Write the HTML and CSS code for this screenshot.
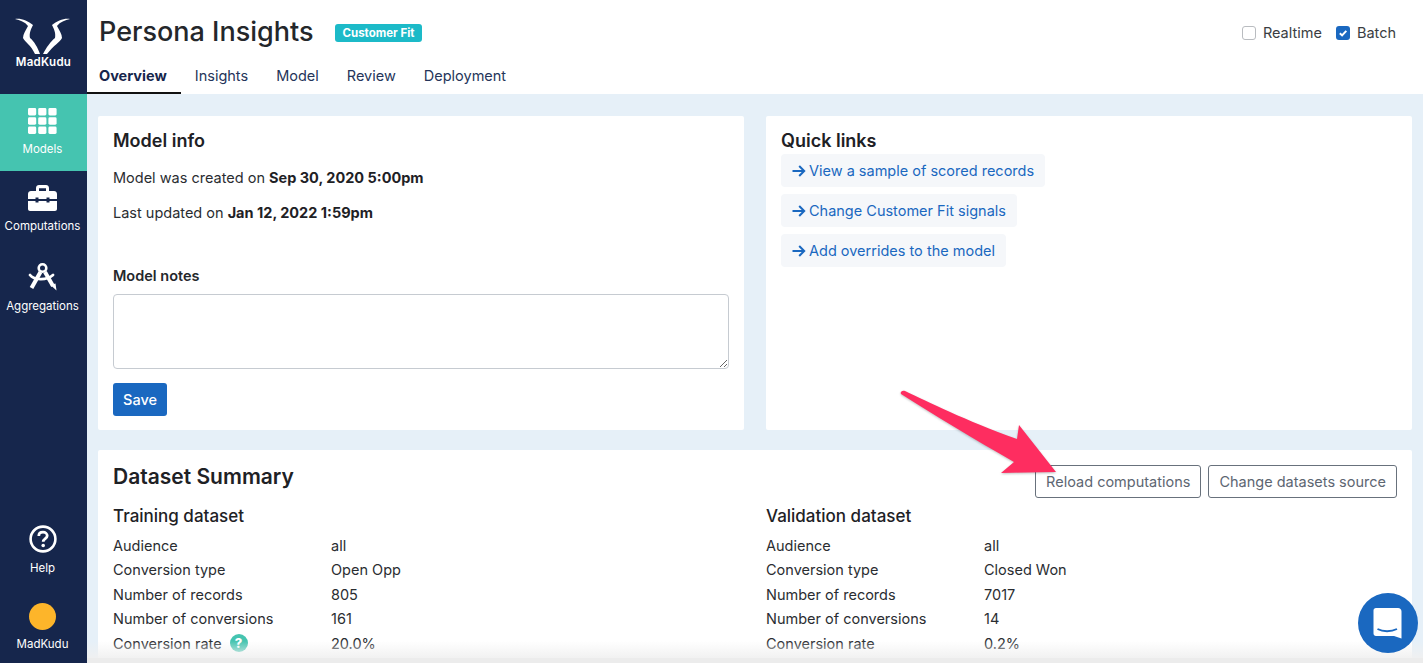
FILE: index.html
```html
<!DOCTYPE html>
<html lang="en">
  <head>
    <meta charset="UTF-8" />
    <meta name="viewport" content="width=device-width, initial-scale=1.0" />
    <title>Persona Insights</title>

    <link rel="stylesheet" href="styles.css">
  </head>
  <body>
    <div class="app">
      <nav class="sidebar">
        <div class="brand">
          <svg class="brand-logo" viewBox="0 0 58 38" width="58" height="38">
            <g id="antler">
              <path fill="#fff" d="M1 2 C6 3 11 5 14 9 C12 13 9 17 9 21 C11 25 17 28 21 37 L26 37 C24 31 20 24 16 21 C15 16 17 12 19 8 C14 4 7 1 1 2 Z" />
            </g>
            <path fill="#fff" d="M56 2 C51 3 46 5 43 9 C45 13 48 17 48 21 C46 25 40 28 33 37 L29 37 C32 31 37 24 41 21 C42 16 40 12 38 8 C43 4 50 1 56 2 Z" />
          </svg>
          <span class="brand-name">MadKudu</span>
        </div>

        <a class="nav-item active">
          <svg viewBox="0 0 29 26" width="29" height="26">
            <g fill="#fff">
              <rect x="0" y="0" width="8.2" height="7.4" rx="1.4" />
              <rect x="10.2" y="0" width="8.2" height="7.4" rx="1.4" />
              <rect x="20.4" y="0" width="8.2" height="7.4" rx="1.4" />
              <rect x="0" y="9.3" width="8.2" height="7.4" rx="1.4" />
              <rect x="10.2" y="9.3" width="8.2" height="7.4" rx="1.4" />
              <rect x="20.4" y="9.3" width="8.2" height="7.4" rx="1.4" />
              <rect x="0" y="18.6" width="8.2" height="7.4" rx="1.4" />
              <rect x="10.2" y="18.6" width="8.2" height="7.4" rx="1.4" />
              <rect x="20.4" y="18.6" width="8.2" height="7.4" rx="1.4" />
            </g>
          </svg>
          <span>Models</span>
        </a>
        <a class="nav-item">
          <svg viewBox="0 0 29 26" width="29" height="26">
            <path fill="#fff" d="M8 6 V3 C8 1.3 9.3 0 11 0 H18 C19.700 0 21 1.300 21 3 V6 H18 V3.200 H11 V6 Z" />
            <path fill="#fff" d="M3 6 H26 C27.700 6 29 7.300 29 9 V14 H21.500 V12.500 H18.500 V14 H10.500 V12.500 H7.500 V14 H0 V9 C0 7.300 1.300 6 3 6 Z" />
            <path fill="#fff" d="M0 16 H7.500 V17.500 H10.500 V16 H18.500 V17.500 H21.500 V16 H29 V24 C29 25.100 28.100 26 27 26 H2 C0.900 26 0 25.100 0 24 Z" />
          </svg>
          <span>Computations</span>
        </a>
        <a class="nav-item">
          <svg viewBox="0 0 29 29" width="29" height="29">
            <circle cx="14.500" cy="6" r="3.800" fill="none" stroke="#fff" stroke-width="2.600" />
            <path fill="none" stroke="#fff" stroke-width="4" d="M12.500 10 L3.500 26" />
            <path fill="none" stroke="#fff" stroke-width="4" d="M17 10 L25 24" />
            <path fill="none" stroke="#fff" stroke-width="2.800" stroke-linecap="round" d="M2 13 C6 18 18 19 25 13" />
            <path fill="#fff" d="M22.500 23 L27.500 21.500 L28.500 28.500 Z" />
          </svg>
          <span>Aggregations</span>
        </a>

        <a class="nav-item nav-help">
          <svg viewBox="0 0 28 28" width="28" height="28">
            <circle cx="14" cy="14" r="12.400" fill="none" stroke="#fff" stroke-width="2.600" />
            <path fill="none" stroke="#fff" stroke-width="2.800" d="M9.800 11 C9.800 8.500 11.700 7.200 14 7.200 C16.400 7.200 18.200 8.700 18.200 10.800 C18.200 13.600 14.200 13.600 14.200 16.800" />
            <circle cx="14.200" cy="20.500" r="1.800" fill="#fff" />
          </svg>
          <span>Help</span>
        </a>
        <a class="nav-item nav-account">
          <span class="avatar"></span>
          <span>MadKudu</span>
        </a>
      </nav>

      <div class="content">
        <header class="topbar">
          <div class="title-row">
            <h1>Persona Insights</h1>
            <span class="tag">Customer Fit</span>
            <div class="modes">
              <label class="mode"><span class="box"></span>Realtime</label>
              <label class="mode">
                <span class="box checked">
                  <svg viewBox="0 0 14 14" width="14" height="14">
                    <path fill="none" stroke="#fff" stroke-width="2" d="M3.800 7.200 L6.100 9.400 L10.300 4.900" />
                  </svg>
                </span>Batch
              </label>
            </div>
          </div>
          <ul class="tabs">
            <li class="tab active">Overview</li>
            <li class="tab">Insights</li>
            <li class="tab">Model</li>
            <li class="tab">Review</li>
            <li class="tab">Deployment</li>
          </ul>
        </header>

        <main class="main">
          <div class="cards-top">
            <section class="card">
              <h2>Model info</h2>
              <p class="info-line">Model was created on <b>Sep 30, 2020 5:00pm</b></p>
              <p class="info-line">Last updated on <b>Jan 12, 2022 1:59pm</b></p>
              <label class="notes-label">Model notes</label>
              <textarea class="notes"></textarea>
              <button class="btn-save">Save</button>
            </section>

            <section class="card">
              <h2>Quick links</h2>
              <div class="links">
                <a class="quick-link">
                  <svg viewBox="0 0 14 12" width="14" height="12"><path fill="none" stroke="#1a68c0" stroke-width="2" d="M0.500 6 H12 M7.200 1 L12.200 6 L7.200 11" /></svg>
                  View a sample of scored records
                </a>
                <a class="quick-link">
                  <svg viewBox="0 0 14 12" width="14" height="12"><path fill="none" stroke="#1a68c0" stroke-width="2" d="M0.500 6 H12 M7.200 1 L12.200 6 L7.200 11" /></svg>
                  Change Customer Fit signals
                </a>
                <a class="quick-link">
                  <svg viewBox="0 0 14 12" width="14" height="12"><path fill="none" stroke="#1a68c0" stroke-width="2" d="M0.500 6 H12 M7.200 1 L12.200 6 L7.200 11" /></svg>
                  Add overrides to the model
                </a>
              </div>
            </section>
          </div>

          <section class="card card-summary">
            <div class="summary-head">
              <h2 class="summary-title">Dataset Summary</h2>
              <div class="summary-actions">
                <button class="btn-outline">Reload computations</button>
                <button class="btn-outline">Change datasets source</button>
              </div>
            </div>
            <div class="datasets">
              <div class="dataset">
                <h3>Training dataset</h3>
                <dl class="rows">
                  <dt>Audience</dt><dd>all</dd>
                  <dt>Conversion type</dt><dd>Open Opp</dd>
                  <dt>Number of records</dt><dd>805</dd>
                  <dt>Number of conversions</dt><dd>161</dd>
                  <dt>Conversion rate <span class="hint">?</span></dt><dd>20.0%</dd>
                </dl>
              </div>
              <div class="dataset">
                <h3>Validation dataset</h3>
                <dl class="rows">
                  <dt>Audience</dt><dd>all</dd>
                  <dt>Conversion type</dt><dd>Closed Won</dd>
                  <dt>Number of records</dt><dd>7017</dd>
                  <dt>Number of conversions</dt><dd>14</dd>
                  <dt>Conversion rate</dt><dd>0.2%</dd>
                </dl>
              </div>
            </div>
          </section>
        </main>
      </div>
    </div>

    <div class="bottom-shade"></div>

    <svg class="arrow" viewBox="0 0 170 90" width="170" height="90">
      <path fill="#fe2d60" d="M2 5 C1 3 3 1 6 2 C30 13 65 31 118 50 L120 36 L157 83 L102 84 L115 73 C75 50 35 26 2 5 Z" />
    </svg>

    <div class="chat">
      <svg viewBox="0 0 30 32" width="30" height="32">
        <path fill="#fff" d="M3 1 H25 C27 1 28.500 2.500 28.500 4.500 V31.500 L21 29 H3 C1.500 29 0.500 28 0.500 26.500 V3.500 C0.500 2 1.500 1 3 1 Z" />
        <path fill="none" stroke="#1a68c0" stroke-width="1.800" d="M4.500 22 C10 25 18 25 24 22" />
      </svg>
    </div>
  </body>
</html>
```

FILE: styles.css
```css
* {
  box-sizing: border-box;
}

html,
body {
  margin: 0;
  height: 100%;
  overflow: hidden;
}

body {
  font-family: "Inter", "Liberation Sans", sans-serif;
  font-size: 14.5px;
  color: #24272b;
  background: #e6f0f8;
}

.app {
  display: flex;
  height: 663px;
}

/* sidebar */
.sidebar {
  display: flex;
  flex-direction: column;
  flex: 0 0 87px;
  background: #16264c;
  color: #fff;
}

.brand {
  display: flex;
  flex-direction: column;
  align-items: center;
  height: 94px;
  padding-top: 17px;
}

.brand-logo {
  display: block;
  margin-left: -2px;
}

.brand-name {
  font-size: 11.5px;
  font-weight: 600;
  letter-spacing: 0.3px;
  margin-top: 0;
}

.nav-item {
  display: flex;
  flex-direction: column;
  align-items: center;
  height: 77px;
  padding-top: 14px;
  font-size: 11.5px;
  color: #fff;
}

.nav-item svg {
  display: block;
  margin-left: -2px;
  margin-bottom: 8px;
}

.nav-item span {
  margin-left: -2px;
}

.nav-item.active {
  background: #45c4b0;
}

.nav-help {
  margin-top: auto;
  height: 78px;
  padding-top: 0;
}

.nav-account {
  height: 60px;
  padding-top: 0;
}

.avatar {
  display: block;
  width: 27px;
  height: 27px;
  border-radius: 50%;
  background: #fdb52a;
  margin-bottom: 7px;
}

/* header */
.content {
  flex: 1;
  min-width: 0;
  display: flex;
  flex-direction: column;
}

.topbar {
  height: 94px;
  background: #fff;
  flex: none;
}

.title-row {
  display: flex;
  align-items: center;
  height: 62px;
  padding-left: 12px;
  padding-right: 27px;
}

h1 {
  margin: 0;
  font-size: 27px;
  font-weight: 500;
  color: #24272b;
}

.tag {
  margin-left: 22px;
  margin-top: 3px;
  padding: 3px 7px;
  font-size: 11.5px;
  line-height: 12px;
  font-weight: 700;
  color: #fff;
  background: #1cbac8;
  border-radius: 3px;
}

.modes {
  margin-left: auto;
  margin-top: 3px;
  display: flex;
  gap: 14px;
}

.mode {
  display: flex;
  align-items: center;
  gap: 7px;
  color: #3a3d42;
}

.box {
  display: block;
  width: 14px;
  height: 14px;
  border: 1px solid #b9bcc0;
  border-radius: 3px;
  background: #fff;
}

.box.checked {
  background: #1a68c0;
  border: 0;
}

.box svg {
  display: block;
}

.tabs {
  display: flex;
  list-style: none;
  margin: 0;
  padding: 0;
}

.tab {
  height: 32px;
  padding: 5px 14px 0;
  color: #25355a;
  line-height: 18px;
}

.tab.active {
  padding-left: 12px;
  font-weight: 700;
  color: #16264c;
  border-bottom: 2px solid #111;
}

/* cards */
.main {
  flex: 1;
  padding: 22px 11px 0;
  display: flex;
  flex-direction: column;
  gap: 22px;
  min-height: 0;
}

.cards-top {
  display: grid;
  grid-template-columns: 1fr 1fr;
  gap: 22px;
  height: 312px;
  flex: none;
}

.card {
  background: #fff;
  border-radius: 2px;
  padding: 14px 15px;
}

h2 {
  margin: 0;
  font-size: 18px;
  line-height: 22px;
  font-weight: 600;
  color: #1e2125;
}

.info-line {
  margin: 0;
  line-height: 18px;
  padding-top: 17px;
  padding-bottom: 0;
  color: #2a2d31;
}

.info-line b {
  font-weight: 700;
  color: #1e2125;
}

.notes-label {
  display: block;
  margin-top: 45px;
  line-height: 18px;
  font-weight: 600;
}

.notes {
  display: block;
  width: 100%;
  height: 75px;
  margin-top: 9px;
  border: 1px solid #c6cbd1;
  border-radius: 4px;
  background: #fff;
}

.btn-save {
  display: block;
  margin-top: 14px;
  width: 54px;
  height: 33px;
  font: inherit;
  font-weight: 500;
  color: #fff;
  background: #1a68c0;
  border: 0;
  border-radius: 3px;
}

.links {
  display: flex;
  flex-direction: column;
  align-items: flex-start;
  gap: 7px;
  margin: 2px 0 0;
  padding-left: 0;
}

.quick-link {
  display: flex;
  align-items: center;
  gap: 3px;
  height: 33px;
  padding: 0 11px;
  margin-left: 0;
  color: #1a68c0;
  background: #f5f7fa;
  border-radius: 4px;
}

.card-summary {
  flex: 1;
  padding-top: 15px;
  overflow: hidden;
}

.summary-head {
  display: flex;
  justify-content: space-between;
  height: 40px;
}

.summary-title {
  font-size: 21px;
  line-height: 24px;
}

.summary-actions {
  display: flex;
  gap: 7px;
}

.btn-outline {
  height: 33px;
  padding: 0 10px;
  font: inherit;
  color: #5d6672;
  background: #fff;
  border: 1px solid #68717c;
  border-radius: 3px;
}

.datasets {
  display: grid;
  grid-template-columns: 1fr 1fr;
  gap: 22px;
}

h3 {
  margin: 0 0 6px;
  font-size: 17px;
  line-height: 22px;
  font-weight: 500;
  color: #1e2125;
}

.rows {
  display: grid;
  grid-template-columns: 218px 1fr;
  grid-auto-rows: 24.5px;
  align-items: center;
  margin: 0;
}

.rows dt,
.rows dd {
  margin: 0;
  display: flex;
  align-items: center;
  color: #2a2d31;
}

.hint {
  display: inline-block;
  width: 18px;
  height: 18px;
  margin-left: 8px;
  border-radius: 50%;
  background: #45c4b0;
  color: #fff;
  font-size: 13px;
  font-weight: 800;
  line-height: 18px;
  text-align: center;
}

/* things on top */
.bottom-shade {
  position: absolute;
  left: 87px;
  right: 0;
  bottom: 0;
  height: 22px;
  border-bottom: 5px solid #ececec;
  background: linear-gradient(rgba(245, 245, 245, 0), rgba(240, 240, 240, 0.9));
}

.arrow {
  position: absolute;
  left: 899px;
  top: 389px;
  filter: drop-shadow(0 1px 1px rgba(0, 0, 0, 0.25));
}

.chat {
  position: absolute;
  left: 1358px;
  top: 593px;
  width: 60px;
  height: 60px;
  border-radius: 50%;
  background: #1a68c0;
  display: flex;
  align-items: center;
  justify-content: center;
}

.chat svg {
  display: block;
}
```
